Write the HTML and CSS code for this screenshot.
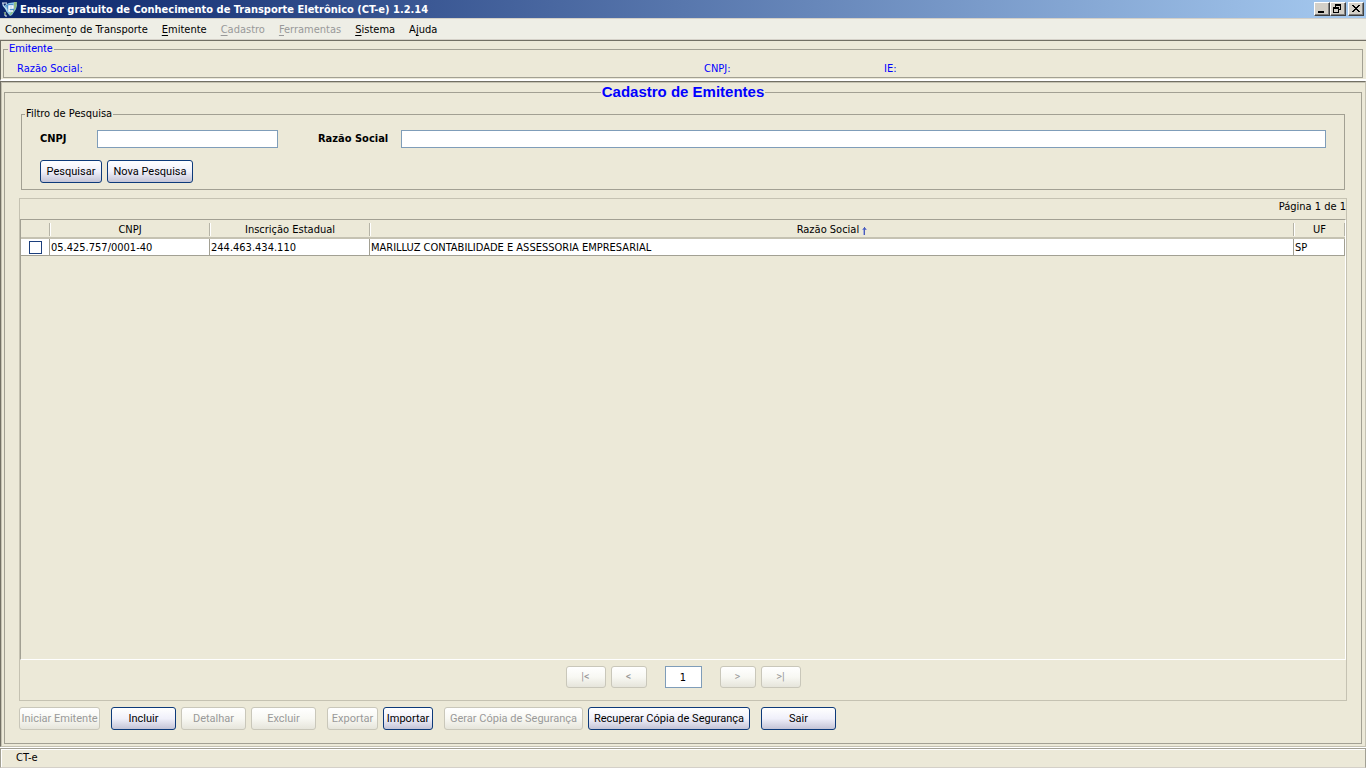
FILE: index.html
```
<!DOCTYPE html>
<html lang="pt-BR">
<head>
<meta charset="utf-8">
<title>Emissor gratuito de Conhecimento de Transporte Eletrônico (CT-e) 1.2.14</title>
<link rel="stylesheet" href="styles.css">
</head>
<body>
<header class="titlebar">
  <svg class="app-icon" viewBox="0 0 16 16" aria-hidden="true">
    <path d="M3 4L7 2L14 1L15 4L14 8L10 14L8 15L4 10Z" fill="#8cc8e6"/>
    <path d="M12 1H15L14 7L9 14L7 14L12 8Z" fill="#93bd83"/>
    <path d="M4 4L7 3H11L12 5V9L9 11L6 10Z" fill="#4f8fcc"/>
    <path d="M0 1V3H2V1M4 1V3H5M3 11V15H5" stroke="#dfeaf5" fill="none"/>
    <path d="M2 11L4 14" stroke="#6f9a5c" fill="none"/>
    <path d="M7 7H11V5H7V10H11" stroke="#fff" stroke-width="1.4" fill="none"/>
    <path d="M1 4L5 9" stroke="#b8e0f2" stroke-width="1.5"/>
  </svg>
  <h1 class="title">Emissor gratuito de Conhecimento de Transporte Eletrônico (CT-e) 1.2.14</h1>
  <div class="window-controls">
    <button class="win-btn" type="button" aria-label="Minimizar"><svg viewBox="0 0 12 10"><path d="M2 7H8V9H2Z"/></svg></button>
    <button class="win-btn" type="button" aria-label="Restaurar"><svg viewBox="0 0 12 10"><path fill-rule="evenodd" d="M3 0H9V6H7V5H8V2H4V3H3ZM1 3H7V9H1ZM2 5V8H6V5Z"/></svg></button>
    <button class="win-btn win-close" type="button" aria-label="Fechar"><svg viewBox="0 0 12 10"><path d="M2 1H4V2H5V3H7V2H8V1H10V2H9V3H8V4H7V5H8V6H9V7H10V8H8V7H7V6H5V7H4V8H2V7H3V6H4V5H5V4H4V3H3V2H2Z"/></svg></button>
  </div>
</header>
<nav class="menubar">
  <button class="menu" type="button">Conhecimen<u>t</u>o de Transporte</button>
  <button class="menu" type="button"><u>E</u>mitente</button>
  <button class="menu" type="button" disabled><u>C</u>adastro</button>
  <button class="menu" type="button" disabled><u>F</u>erramentas</button>
  <button class="menu" type="button"><u>S</u>istema</button>
  <button class="menu" type="button">A<u>j</u>uda</button>
</nav>
<section class="issuer-panel">
  <fieldset class="issuer">
    <legend>Emitente</legend>
    <div class="issuer-row">
      <span class="issuer-name">Razão Social:</span>
      <span class="issuer-cnpj">CNPJ:</span>
      <span class="issuer-ie">IE:</span>
    </div>
  </fieldset>
</section>
<main class="workspace">
  <fieldset class="register">
    <legend>Cadastro de Emitentes</legend>
    <fieldset class="filter">
      <legend>Filtro de Pesquisa</legend>
      <form class="filter-form">
        <div class="filter-fields">
          <label class="label-cnpj" for="cnpj">CNPJ</label>
          <input class="field field-cnpj" id="cnpj" type="text">
          <label class="label-name" for="razao">Razão Social</label>
          <input class="field field-name" id="razao" type="text">
        </div>
        <div class="group">
          <button class="btn w-62" type="button">Pesquisar</button>
          <button class="btn w-86" type="button">Nova Pesquisa</button>
        </div>
      </form>
    </fieldset>
    <section class="results">
      <p class="page-info">Página 1 de 1</p>
      <div class="scroll">
        <table class="grid">
          <colgroup><col class="c-check"><col class="c-id"><col class="c-id"><col><col class="c-uf"></colgroup>
          <thead>
            <tr><th></th><th>CNPJ</th><th>Inscrição Estadual</th><th>Razão Social <svg class="sort" viewBox="0 0 5 9" aria-hidden="true"><path d="M0 3H5V4H0Z" fill="#a5aedd"/><path d="M1 2H4V4H1Z" fill="#6d7dcc"/><path d="M1 4H2V9H1Z" fill="#a5aedd"/><path d="M2 1H3V9H2Z" fill="#4a5cb8"/></svg></th><th>UF</th></tr>
          </thead>
          <tbody>
            <tr><td class="check"><input class="tick" type="checkbox" aria-label="Selecionar emitente"></td><td>05.425.757/0001-40</td><td>244.463.434.110</td><td>MARILLUZ CONTABILIDADE E ASSESSORIA EMPRESARIAL</td><td>SP</td></tr>
          </tbody>
        </table>
      </div>
      <div class="pager">
        <button class="btn page-end" type="button" disabled>|&lt;</button>
        <button class="btn page-step" type="button" disabled>&lt;</button>
        <input class="page-number" type="text" value="1" aria-label="Página">
        <button class="btn page-step" type="button" disabled>&gt;</button>
        <button class="btn page-end" type="button" disabled>&gt;|</button>
      </div>
    </section>
    <div class="actions">
      <div class="group"><button class="btn w-81" type="button" disabled>Iniciar Emitente</button></div>
      <div class="group">
        <button class="btn w-65" type="button">Incluir</button>
        <button class="btn w-65" type="button" disabled>Detalhar</button>
        <button class="btn w-65" type="button" disabled>Excluir</button>
      </div>
      <div class="group">
        <button class="btn w-51" type="button" disabled>Exportar</button>
        <button class="btn w-50" type="button">Importar</button>
      </div>
      <div class="group">
        <button class="btn w-139" type="button" disabled>Gerar Cópia de Segurança</button>
        <button class="btn w-162" type="button">Recuperar Cópia de Segurança</button>
      </div>
      <div class="group"><button class="btn w-75" type="button">Sair</button></div>
    </div>
  </fieldset>
</main>
<footer class="status">CT-e</footer>
</body>
</html>
```
FILE: styles.css
```
* { box-sizing: border-box; }
:root {
  --ui: "DejaVu Sans Condensed", "Noto Sans", sans-serif;
  --heading: "Liberation Sans", Arial, sans-serif;
  --button: Roboto, "Liberation Sans", sans-serif;
  --face: #ece9d8;
  --line: #a2a093;
  --soft: #c5c2b2;
}
body {
  margin: 0;
  min-height: 100vh;
  display: flex;
  flex-direction: column;
  background: var(--face);
  color: #000;
  font: 11px/14px var(--ui);
}
button, input { font: inherit; color: inherit; margin: 0; }
fieldset { margin: 0; min-width: 0; border: 1px solid var(--line); }

.titlebar {
  display: flex;
  align-items: center;
  height: 18px;
  padding: 0 2px;
  gap: 2px;
  background: linear-gradient(90deg, #0a246a, #a6caf0);
  color: #fff;
}
.app-icon { width: 16px; height: 16px; }
.title { flex: 1; margin: 0; padding-top: 1px; font-size: 11px; line-height: 14px; font-weight: bold; }
.window-controls { display: flex; }
.win-btn {
  width: 16px;
  height: 14px;
  padding: 1px;
  border: 1px solid;
  border-color: #fff #404040 #404040 #fff;
  background: #d4d0c8;
  box-shadow: inset -1px -1px #808080;
}
.win-btn svg { display: block; width: 12px; height: 10px; }
.win-close { margin-left: 2px; }

.menubar {
  display: flex;
  gap: 14px;
  height: 23px;
  padding: 0 5px;
  background: #eeeee6;
  border-top: 1px solid #d4d0c8;
  border-bottom: 1px solid #716f64;
  box-shadow: inset 0 -1px #d4d0c8;
}
.menu { padding: 0; border: 0; background: none; }
.menu:disabled { color: #999; }
.menu u { text-underline-offset: 2px; text-decoration-skip-ink: none; }

.issuer-panel {
  padding: 1px 3px 1px 2px;
  border-left: 1px solid #716f64;
  border-bottom: 2px solid #fff;
  color: #00f;
}
.issuer { padding: 0 4px 1px; }
.issuer legend { padding: 0 1px; font-family: var(--button); }
.issuer-row { display: flex; padding: 6px 9px 0; }
.issuer-name { flex: 1; }
.issuer-cnpj { width: 180px; }
.issuer-ie { width: 465px; }

.workspace {
  flex: 1;
  display: flex;
  border: 1px solid;
  border-color: #716f64 var(--soft) var(--soft) #716f64;
  box-shadow: inset 1px 1px var(--soft);
  padding: 2px 3px 2px 3px;
}
.register { flex: 1; display: flex; flex-direction: column; padding: 7px 14px 13px; }
.register > legend {
  margin: 0 auto;
  padding: 0 1px;
  color: #00f;
  font: bold 15px/16px var(--heading);
}
.filter { margin: 0 2px; padding: 0 18px 6px; }
.filter legend { margin-left: -15px; padding: 0 1px; }
.filter-form { display: flex; flex-direction: column; gap: 12px; padding-top: 9px; }
.filter-fields { display: flex; align-items: center; font-weight: bold; }
.label-cnpj { width: 57px; }
.label-name { width: 83px; margin-left: 40px; }
.field { height: 18px; border: 1px solid #7f9db9; background: #fff; padding: 0 2px; font-weight: normal; }
.field-cnpj { width: 181px; }
.field-name { flex: 1; min-width: 0; }

.group { display: flex; gap: 5px; }
.btn {
  height: 23px;
  padding: 0;
  border: 1px solid #0d3a7a;
  border-radius: 3px;
  background: linear-gradient(#fff, #f0f0fa 50%, #c4c4d6);
  font: 11px/14px var(--button);
  white-space: nowrap;
}
.btn:disabled { color: #999; border-color: #c9c7ba; background: linear-gradient(#fff, #f8f8f3 50%, #e6e5db); }
.w-50 { width: 50px; }
.w-51 { width: 51px; }
.w-62 { width: 62px; }
.w-65 { width: 65px; }
.w-75 { width: 75px; }
.w-81 { width: 81px; }
.w-86 { width: 86px; }
.w-139 { width: 139px; }
.w-162 { width: 162px; }

.results { flex: 1; display: flex; flex-direction: column; margin-top: 8px; border: 1px solid var(--soft); }
.page-info { margin: 0; padding: 1px 0 5px; text-align: right; }
.scroll { flex: 1; border: 1px solid; border-color: var(--line) #fff #fff var(--line); }
.grid { width: 100%; table-layout: fixed; border-spacing: 0; }
.c-check { width: 29px; }
.c-id { width: 160px; }
.c-uf { width: 51px; }
.grid th {
  height: 19px;
  padding: 2px 0 0;
  font-weight: normal;
  border-bottom: 2px solid var(--soft);
  background:
    linear-gradient(#b5b3a6, #b5b3a6) right 3px / 1px 13px no-repeat,
    linear-gradient(#fff, #fff) left 3px / 1px 13px no-repeat;
}
.grid th:first-child { background: linear-gradient(#b5b3a6, #b5b3a6) right 3px / 1px 13px no-repeat; }
.grid td { height: 17px; padding: 1px 1px 0; background: #fff; border: solid var(--line); border-width: 0 1px 1px 0; }
.grid .check { padding: 0; text-align: center; }
.tick { appearance: none; display: block; width: 13px; height: 13px; margin: 0 auto; border: 1px solid #1c3f7c; background: #fff; }
.sort { width: 5px; height: 9px; vertical-align: -2px; }

.pager { display: flex; justify-content: center; gap: 5px; padding: 6px 0 12px; }
.pager .btn { height: 22px; }
.page-end { width: 40px; }
.page-step { width: 36px; }
.page-number { width: 37px; height: 22px; margin: 0 13px; padding: 0; text-align: center; border: 1px solid #7f9db9; background: #fff; }
.actions { display: flex; flex-wrap: wrap; gap: 11px; padding-top: 6px; }

.status {
  margin-top: 1px;
  padding: 2px 15px;
  border: 1px solid var(--line);
  border-bottom-color: #d4d0c8;
  box-shadow: inset 1px 1px #fff, 0 -1px #fff;
}
```
